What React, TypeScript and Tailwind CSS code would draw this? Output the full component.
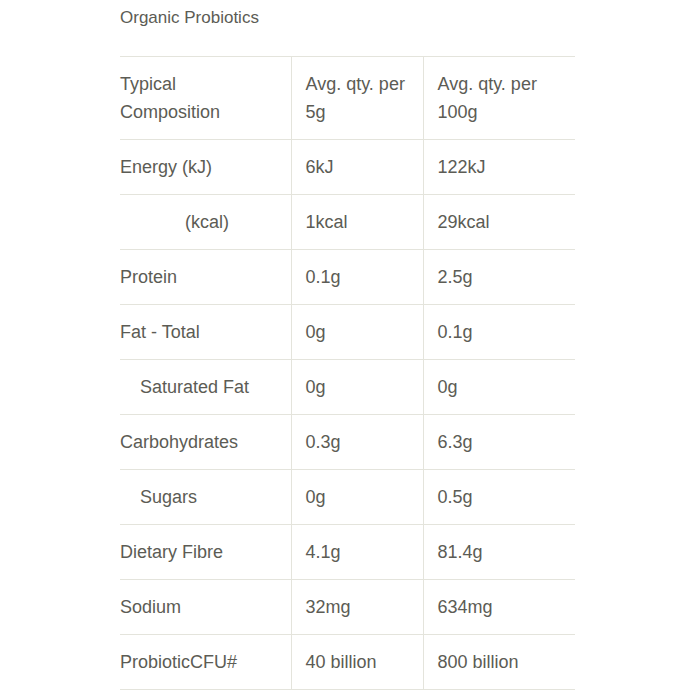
import React from 'react';

interface NutritionRow {
    label: string;
    indent?: string;
    perServe: string;
    per100: string;
}

const rows: NutritionRow[] = [
    { label: 'Energy (kJ)', perServe: '6kJ', per100: '122kJ' },
    { label: '(kcal)', indent: 'pl-[65px]', perServe: '1kcal', per100: '29kcal' },
    { label: 'Protein', perServe: '0.1g', per100: '2.5g' },
    { label: 'Fat - Total', perServe: '0g', per100: '0.1g' },
    { label: 'Saturated Fat', indent: 'pl-[20px]', perServe: '0g', per100: '0g' },
    { label: 'Carbohydrates', perServe: '0.3g', per100: '6.3g' },
    { label: 'Sugars', indent: 'pl-[20px]', perServe: '0g', per100: '0.5g' },
    { label: 'Dietary Fibre', perServe: '4.1g', per100: '81.4g' },
    { label: 'Sodium', perServe: '32mg', per100: '634mg' },
    { label: 'ProbioticCFU#', perServe: '40 billion', per100: '800 billion' },
];

const App: React.FC = () => {
    return (
        <div
            className="w-[700px] h-[700px] bg-white overflow-hidden pl-[120px] text-[#5c5c55]"
            style={{ fontFamily: '"Liberation Sans", Arial, sans-serif' }}
        >
            <p className="pt-[6px] text-[17px] leading-6">Organic Probiotics</p>
            <table className="mt-[26px] w-[455px] border-collapse text-[18px] leading-7 table-fixed">
                <colgroup>
                    <col className="w-[171px]" />
                    <col className="w-[132px]" />
                    <col className="w-[152px]" />
                </colgroup>
                <tbody>
                    <tr className="border-y border-[#e4e4dc]">
                        <td className="py-[13px] pr-3 align-top">
                            Typical
                            <br />
                            Composition
                        </td>
                        <td className="py-[13px] pl-[14px] pr-2 align-top border-l border-[#e4e4dc]">
                            Avg. qty. per
                            <br />
                            5g
                        </td>
                        <td className="py-[13px] pl-[14px] pr-2 align-top border-l border-[#e4e4dc]">
                            Avg. qty. per
                            <br />
                            100g
                        </td>
                    </tr>
                    {rows.map((row, key) => (
                        <tr key={key} className="border-b border-[#e4e4dc]">
                            <td className={'py-[13px] pr-3 whitespace-nowrap ' + (row.indent || '')}>
                                {row.label}
                            </td>
                            <td className="py-[13px] pl-[14px] border-l border-[#e4e4dc]">{row.perServe}</td>
                            <td className="py-[13px] pl-[14px] border-l border-[#e4e4dc]">{row.per100}</td>
                        </tr>
                    ))}
                </tbody>
            </table>
        </div>
    );
};

export default App;
